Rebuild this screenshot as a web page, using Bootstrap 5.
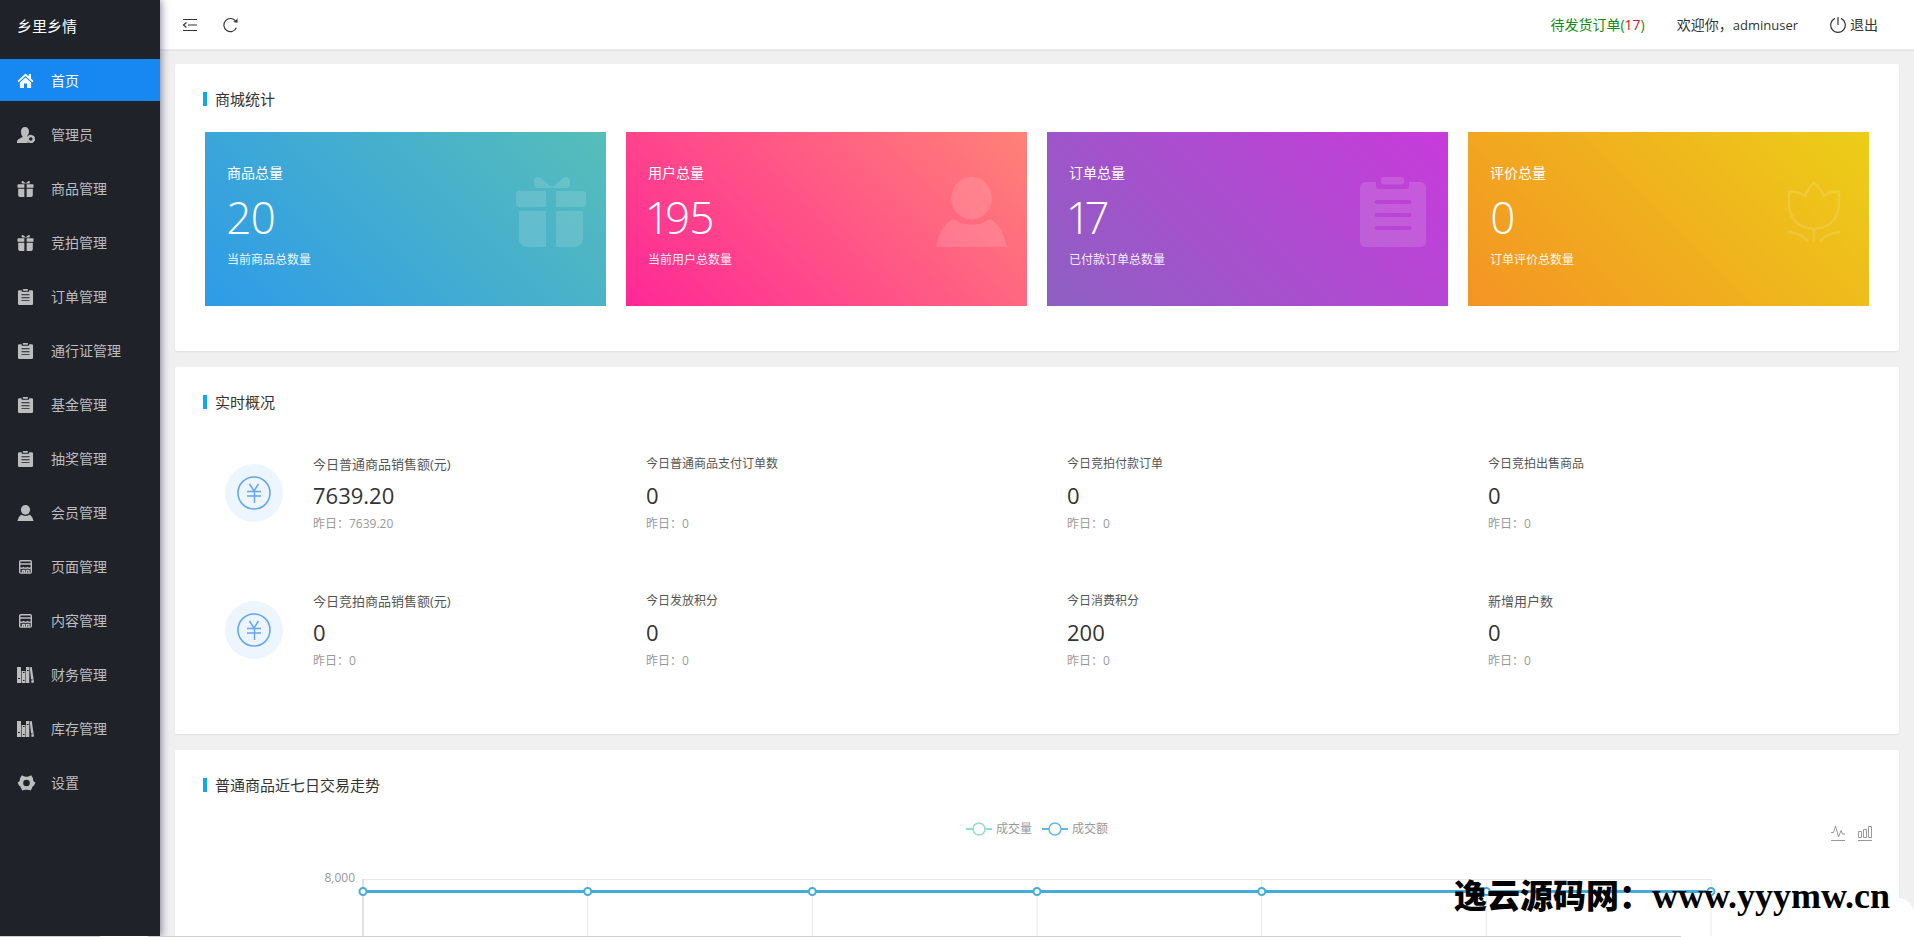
<!DOCTYPE html>
<html lang="zh-CN">
<head>
<meta charset="utf-8">
<meta name="viewport" content="width=device-width, initial-scale=1">
<title>乡里乡情</title>
<link href="https://cdn.jsdelivr.net/npm/bootstrap@5.3.0/dist/css/bootstrap.min.css" rel="stylesheet">
<style>
  body { font-family: "Open Sans", "Noto Sans CJK SC", sans-serif; font-size: 14px; line-height: 20px; color: #333; background: #f0f0f0; }
  a { color: inherit; text-decoration: none; }
  svg { display: block; flex: none; }
  .side { width: 160px; background: #20222a; color: #bcbdbf; box-shadow: 1px 0 8px rgba(30,30,60,.55); z-index: 3; }
  .brand { font-size: 15px; line-height: 53px; color: #fff; padding: 0 17px; margin-bottom: 6px; }
  .side .nav { gap: 12px; }
  .side .nav-link { display: flex; align-items: center; gap: 17px; height: 42px; padding: 1px 17px 0; color: inherit; }
  .side .nav-link.active { background: #1787f1; color: #fff; }
  .topbar { height: 50px; padding: 0 36px 0 22px; background: #fff; border-bottom: 1px solid #e8e8e8; box-shadow: 0 1px 1px rgba(0,0,0,.04); color: #333; }
  .user-links { gap: 32px; }
  .user-links .name { font-size: 13px; }
  .tool { border: 0; background: none; padding: 0; color: #333; display: flex; align-items: center; }
  .main-area { padding: 14px 15px 0; scrollbar-width: none; }
  .panel { background: #fff; border-radius: 2px; box-shadow: 0 1px 2px rgba(0,0,0,.07); padding: 25px 30px 45px; margin-bottom: 16px; }
  .panel-title { font-size: 15px; line-height: 20px; margin: 0 -2px 23px; gap: 8px; font-weight: 400; }
  .panel-title::before { content: ""; width: 4px; height: 14px; background: #0ea8ee; }
  .row { --bs-gutter-x: 20px; }
  .tile { padding: 31px 20px 37px 22px; color: #fff; }
  .tile-num { font-size: 44px; line-height: 68px; font-weight: 300; font-variant-numeric: proportional-nums; }
  .tile-note { font-size: 12px; line-height: 18px; opacity: .9; }
  .tile svg { margin-top: 14px; opacity: .13; }
  .t-blue { background: linear-gradient(45deg, #2e9be8, #57beb9); }
  .t-pink { background: linear-gradient(45deg, #ff2896, #ff8277); }
  .t-purple { background: linear-gradient(45deg, #8d60c2, #c83bdb); }
  .t-gold { background: linear-gradient(45deg, #f49424, #ecce18); }
  .live { padding-bottom: 65px; }
  .live .panel-title { margin-bottom: 42px; }
  .live .row { --bs-gutter-y: 59px; }
  .cell { padding-left: 20px; gap: 30px; }
  .coin { width: 58px; height: 58px; border-radius: 50%; background: #edf5ff; color: #64a6f3; }
  .k { font-size: 12px; line-height: 20px; color: #555; }
  .k-lg { font-size: 13px; }
  .v { font-size: 22px; line-height: 42px; }
  .y { font-size: 12px; line-height: 16px; color: #999; }
  .trend .panel-title { margin-bottom: 24px; }
  .legend-row { font-size: 12px; line-height: 20px; color: #999; gap: 10px; }
  .chart-tools { top: 6px; right: -4px; gap: 11px; }
  .chart-tools .tool { color: #999; }
  .plot { margin: 40px 158px 0; }
  .y-label { right: 100%; top: -11px; padding-right: 8px; font-size: 12px; color: #999; }
  .plot svg { overflow: visible; }
  .wm { right: 24px; bottom: 15px; z-index: 5; color: #000; font: 900 33px/50px "Liberation Serif", "Noto Sans CJK SC", serif; }
  .wm span { font-size: 36px; }
  .corner { right: 0; bottom: 0; width: 233px; height: 1px; background: #fff; z-index: 4; }
  .corner::after { content: ""; position: absolute; right: 0; bottom: 0; width: 30px; height: 39px; background: #fff; border-radius: 0 16px 0 0; }
  .edge { left: 0; right: 0; bottom: 0; height: 1px; background: linear-gradient(90deg, #cfd0d6 100px, #fff 100px 148px, #cfd0d6 148px); z-index: 4; }
</style>
</head>
<body class="vh-100 overflow-hidden d-flex position-relative">
<svg width="0" height="0" class="position-absolute" aria-hidden="true">
  <symbol id="home" viewBox="0 0 16 16"><path fill="currentColor" d="M8 .6 0 8l1.200 1.200L8 3l6.800 6.200L16 8l-2.500-2.400V1h-2.300v2.500zM8 4.400 2.400 9.400V15H6.500V10.500h3V15h4.100V9.400z"/></symbol>
  <symbol id="admin" viewBox="0 0 18 16"><path fill="currentColor" d="M8 0c2.500 0 4 2 4 4.400 0 1.800-.8 3.600-1.600 4.300-.5.500-.2 1 .3 1.100-1 1.500-1 4.500.3 6.200H0v-1.500c0-2 2.500-3 4.800-4 .8-.4 1-1 .4-1.600C4.400 8 4 6 4 4.400 4 2 5.500 0 8 0z"/><circle cx="13.800" cy="12" r="2.900" fill="none" stroke="currentColor" stroke-width="2.200"/><circle cx="13.800" cy="12" r="3.800" fill="none" stroke="currentColor" stroke-width="1" stroke-dasharray="2 1.980"/></symbol>
  <symbol id="gift" viewBox="0 0 70 70"><path fill="currentColor" d="M3 14h27v16H3q-3 0-3-3V17q0-3 3-3zM40 14h27q3 0 3 3v10q0 3-3 3H40zM3 34h27v36H11q-8-1-8-9zM40 34h27v27q0 8-8 9H40zM18 3q2-5 7-2l8 7q3 3 6 0l8-7q5-3 7 2v5q0 3-4 3H22q-4 0-4-3z"/></symbol>
  <symbol id="clip" viewBox="0 0 70 70"><path fill="currentColor" fill-rule="evenodd" d="M8 5h10v4q0 3 3 3h27q3 0 3-3V5h11q6 0 6 6v53q0 6-6 6H8q-6 0-6-6V11q0-6 6-6zm10 18q-3 2 0 4h34q3-2 0-4zm0 13q-3 2 0 4h34q3-2 0-4zm0 13q-3 2 0 4h34q3-2 0-4z"/><rect x="23" width="23" height="7.500" rx="3" fill="currentColor"/></symbol>
  <symbol id="user" viewBox="0 0 72 71"><ellipse cx="36" cy="21.500" rx="20.500" ry="21.500" fill="currentColor"/><path fill="currentColor" d="M0 71q3-19 16-28 5 0 9 4 11 3 22 0 4-4 9-4 13 9 16 28z"/></symbol>
  <symbol id="shop" viewBox="0 0 16 16"><g fill="none" stroke="currentColor" stroke-width="1.400"><rect x="2.200" y="1.700" width="11.600" height="12.400" rx="1"/><path d="M2 5h12M2 8.500q2 1.500 4 0 2 1.500 4 0 2 1.500 4 0M5 14v-2.500h2V14M9 14v-2.500h2.500V14"/></g></symbol>
  <symbol id="books" viewBox="0 0 17 16"><path fill="currentColor" fill-rule="evenodd" d="M0 0h4v16H0zM1 11v1h2v-1zM4.600 4h3.900v12H4.600zm1.400 1v1h1.500V5zm0 8v1h1.500v-1zM9 0h3.300v16H9zm1 3v1h1.600V3zM12.700.4l2.100-.4L17 15.500l-2.500.5zM14 12.500l.2 1 1.400-.2-.2-1z"/></symbol>
  <symbol id="gear" viewBox="0 0 20 17"><path fill="currentColor" fill-rule="evenodd" d="M5 .3 8 1.500q2 .8 4 0L15 .3l2 3.500q-.5 2.200 1 3.300l1.500 1-1.500 3q-2 .7-2 2.400l-1.500 3q-2-.8-3.200-.8H8.700q-1.200 0-3.200.8l-1.500-3q0-1.700-2-2.400l-1.500-3 1.500-1q1.500-1.100 1-3.300zM10 5a3.500 3.500 0 1 0 0 7 3.500 3.500 0 0 0 0-7z"/></symbol>
  <symbol id="yen" viewBox="0 0 34 34"><g fill="none" stroke="currentColor"><circle cx="17" cy="17" r="16" stroke-width="1.600"/><path stroke-width="1.500" d="M12.500 8 17 15l4.500-7M10 15.500h14M10 20h14M17.500 15v12"/></g></symbol>
</svg>

<aside class="side h-100 flex-shrink-0 position-relative">
  <div class="brand">乡里乡情</div>
  <nav class="nav flex-column">
    <a class="nav-link active" href="#"><svg width="17" height="16"><use href="#home"/></svg>首页</a>
    <a class="nav-link" href="#"><svg width="17" height="16" overflow="visible"><use href="#admin" width="18"/></svg>管理员</a>
    <a class="nav-link" href="#"><svg width="17" height="16"><use href="#gift"/></svg>商品管理</a>
    <a class="nav-link" href="#"><svg width="17" height="16"><use href="#gift"/></svg>竞拍管理</a>
    <a class="nav-link" href="#"><svg width="17" height="16"><use href="#clip"/></svg>订单管理</a>
    <a class="nav-link" href="#"><svg width="17" height="16"><use href="#clip"/></svg>通行证管理</a>
    <a class="nav-link" href="#"><svg width="17" height="16"><use href="#clip"/></svg>基金管理</a>
    <a class="nav-link" href="#"><svg width="17" height="16"><use href="#clip"/></svg>抽奖管理</a>
    <a class="nav-link" href="#"><svg width="17" height="16"><use href="#user"/></svg>会员管理</a>
    <a class="nav-link" href="#"><svg width="17" height="16"><use href="#shop"/></svg>页面管理</a>
    <a class="nav-link" href="#"><svg width="17" height="16"><use href="#shop"/></svg>内容管理</a>
    <a class="nav-link" href="#"><svg width="17" height="16"><use href="#books"/></svg>财务管理</a>
    <a class="nav-link" href="#"><svg width="17" height="16"><use href="#books"/></svg>库存管理</a>
    <a class="nav-link" href="#"><svg width="17" height="16" overflow="visible"><use href="#gear" width="19"/></svg>设置</a>
  </nav>
</aside>

<div class="flex-grow-1 d-flex flex-column h-100 overflow-hidden">
  <header class="topbar flex-shrink-0 d-flex align-items-center justify-content-between">
    <div class="d-flex align-items-center gap-4">
      <button class="tool" type="button" aria-label="收起菜单"><svg width="16" height="18" viewBox="0 0 16 18" fill="none" stroke="currentColor" stroke-width="1.200"><path d="M1 3.500h14M6 9h9M1 14.500h14M4.500 6.500 1.500 9l3 2.500"/></svg></button>
      <button class="tool" type="button" aria-label="刷新"><svg width="17" height="18" viewBox="0 0 18 18" fill="none" stroke="currentColor" stroke-width="1.200"><path d="M15.300 12A7 7 0 1 1 14.500 4.800"/><path fill="currentColor" stroke="none" d="M16.500 1.500v5l-5-.6 3-1.400z"/></svg></button>
    </div>
    <div class="user-links d-flex align-items-center">
      <a href="#" style="color:#118a11">待发货订单(<span style="color:#e01030">17</span>)</a>
      <span>欢迎你，<span class="name">adminuser</span></span>
      <a class="d-flex align-items-center gap-1" href="#"><svg width="16" height="16" viewBox="0 0 16 16" fill="none" stroke="currentColor" stroke-width="1.200"><path d="M8 0v8M5 1.400a7.300 7.300 0 1 0 6 0"/></svg>退出</a>
    </div>
  </header>

  <main class="main-area flex-grow-1 overflow-auto">
    <section class="panel">
      <h2 class="panel-title d-flex align-items-center">商城统计</h2>
      <div class="row row-cols-4">
        <div class="col"><div class="tile t-blue d-flex justify-content-between"><div><div>商品总量</div><div class="tile-num">20</div><div class="tile-note">当前商品总数量</div></div><svg width="70" height="70"><use href="#gift"/></svg></div></div>
        <div class="col"><div class="tile t-pink d-flex justify-content-between"><div><div>用户总量</div><div class="tile-num">195</div><div class="tile-note">当前用户总数量</div></div><svg width="71" height="70"><use href="#user"/></svg></div></div>
        <div class="col"><div class="tile t-purple d-flex justify-content-between"><div><div>订单总量</div><div class="tile-num">17</div><div class="tile-note">已付款订单总数量</div></div><svg width="70" height="70"><use href="#clip"/></svg></div></div>
        <div class="col"><div class="tile t-gold d-flex justify-content-between"><div><div>评价总量</div><div class="tile-num">0</div><div class="tile-note">订单评价总数量</div></div><svg width="70" height="70" viewBox="0 0 70 70" fill="none" stroke="currentColor" stroke-width="2.500"><path d="M35 6q-6 4-9 13Q19 14 10 15v13q2 22 25 24 23-2 25-24V15q-9-1-15 4-4-9-10-13zM35 52v13M9 55q13 1 20 9M61 55q-13 1-20 9"/></svg></div></div>
      </div>
    </section>

    <section class="panel live">
      <h2 class="panel-title d-flex align-items-center">实时概况</h2>
      <div class="row row-cols-4">
        <div class="col"><div class="cell d-flex align-items-center"><div class="coin d-flex align-items-center justify-content-center"><svg width="34" height="34"><use href="#yen"/></svg></div><div><div class="k k-lg">今日普通商品销售额(元)</div><div class="v">7639.20</div><div class="y">昨日：7639.20</div></div></div></div>
        <div class="col"><div class="cell"><div class="k">今日普通商品支付订单数</div><div class="v">0</div><div class="y">昨日：0</div></div></div>
        <div class="col"><div class="cell"><div class="k">今日竞拍付款订单</div><div class="v">0</div><div class="y">昨日：0</div></div></div>
        <div class="col"><div class="cell"><div class="k">今日竞拍出售商品</div><div class="v">0</div><div class="y">昨日：0</div></div></div>
        <div class="col"><div class="cell d-flex align-items-center"><div class="coin d-flex align-items-center justify-content-center"><svg width="34" height="34"><use href="#yen"/></svg></div><div><div class="k k-lg">今日竞拍商品销售额(元)</div><div class="v">0</div><div class="y">昨日：0</div></div></div></div>
        <div class="col"><div class="cell"><div class="k">今日发放积分</div><div class="v">0</div><div class="y">昨日：0</div></div></div>
        <div class="col"><div class="cell"><div class="k">今日消费积分</div><div class="v">200</div><div class="y">昨日：0</div></div></div>
        <div class="col"><div class="cell"><div class="k k-lg">新增用户数</div><div class="v">0</div><div class="y">昨日：0</div></div></div>
      </div>
    </section>

    <section class="panel trend">
      <h2 class="panel-title d-flex align-items-center">普通商品近七日交易走势</h2>
      <div class="position-relative">
        <div class="legend-row d-flex justify-content-center">
          <span class="d-flex align-items-center gap-1"><svg width="26" height="14" viewBox="0 0 26 14" fill="#fff" stroke="#8fe0c4"><path stroke-width="2" d="M0 7h26"/><circle cx="13" cy="7" r="6" stroke-width="1.500"/></svg>成交量</span>
          <span class="d-flex align-items-center gap-1"><svg width="26" height="14" viewBox="0 0 26 14" fill="#fff" stroke="#62b8de"><path stroke-width="2" d="M0 7h26"/><circle cx="13" cy="7" r="6" stroke-width="1.500"/></svg>成交额</span>
        </div>
        <div class="chart-tools position-absolute d-flex">
          <button class="tool" type="button" aria-label="折线图"><svg width="16" height="16" viewBox="0 0 16 16" fill="none" stroke="currentColor"><path d="M1 15.500h14M1 7.500h2.500L5.500 1l3 11L11 5.500l1.500 3.500H15"/></svg></button>
          <button class="tool" type="button" aria-label="柱状图"><svg width="16" height="16" viewBox="0 0 16 16" fill="none" stroke="currentColor"><path d="M1 15.500h14M1.500 6.500h3v6h-3zM6.500 4.500h3v8h-3zM11.500 1.500h3v11h-3z"/></svg></button>
        </div>
      </div>
      <div class="plot position-relative">
        <span class="y-label position-absolute">8,000</span>
        <svg width="100%" height="300">
          <g stroke="#e6e8ea"><line x1="0" x2="100%" y1=".5" y2=".5"/>
            <line x1="16.670%" x2="16.670%" y1="0" y2="100%"/><line x1="33.330%" x2="33.330%" y1="0" y2="100%"/><line x1="50%" x2="50%" y1="0" y2="100%"/><line x1="66.670%" x2="66.670%" y1="0" y2="100%"/><line x1="83.330%" x2="83.330%" y1="0" y2="100%"/><line x1="100%" x2="100%" y1="0" y2="100%"/></g>
          <line x1="0" x2="0" y1="0" y2="100%" stroke="#c4c5c8"/>
          <line x1="0" x2="100%" y1="12.500" y2="12.500" stroke="#43acdb" stroke-width="3"/>
          <g fill="#fff" stroke="#43acdb" stroke-width="2"><circle cx="0" cy="12.500" r="3.500"/><circle cx="16.670%" cy="12.500" r="3.500"/><circle cx="33.330%" cy="12.500" r="3.500"/><circle cx="50%" cy="12.500" r="3.500"/><circle cx="66.670%" cy="12.500" r="3.500"/><circle cx="83.330%" cy="12.500" r="3.500"/><circle cx="100%" cy="12.500" r="3.500"/></g>
        </svg>
      </div>
    </section>
  </main>
</div>
<div class="edge position-absolute"></div>
<div class="corner position-absolute"></div>
<div class="wm position-absolute">逸云源码网：<span>www.yyymw.cn</span></div>
<script src="https://cdn.jsdelivr.net/npm/bootstrap@5.3.0/dist/js/bootstrap.bundle.min.js"></script>
</body>
</html>
